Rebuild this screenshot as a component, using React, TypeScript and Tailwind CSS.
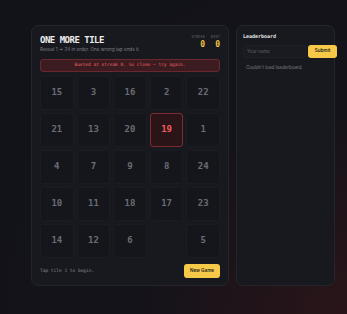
const tiles: (number | null)[] = [
  15, 3, 16, 2, 22,
  21, 13, 20, 19, 1,
  4, 7, 9, 8, 24,
  10, 11, 18, 17, 23,
  14, 12, 6, null, 5,
];

const mono = "font-['DejaVu_Sans_Mono','Liberation_Mono',monospace]";
const sans = "font-['Inter','Noto_Sans',sans-serif]";

function Tile({ n }: { n: number | null }) {
  if (n === null) return <div className="h-[34px]" />;
  const bust = n === 19;
  return (
    <div
      className={
        bust
          ? `flex h-[34px] items-center justify-center rounded-[3px] border border-[#7a2a30] bg-[#2a1418] text-[9px] font-bold text-[#f25c5c] ${mono}`
          : `flex h-[34px] items-center justify-center rounded-[3px] border border-[#1b1c22] bg-[#15161b] text-[9px] font-bold text-[#6a6c74] ${mono}`
      }
    >
      {n}
    </div>
  );
}

export default function App() {
  return (
    <div className="relative h-[314px] w-[347px] overflow-hidden bg-[radial-gradient(circle_at_100%_100%,#2a1519_0%,#14131a_45%,#111318_100%)]">
      <div className="flex gap-[7px] pl-[31px] pt-[25px]">
        {/* game card */}
        <div className="flex w-[198px] flex-col rounded-[7px] border border-[#24252c] bg-[#18191f] px-[8px] pb-[7px] pt-[8px]">
          <div className="flex items-start justify-between">
            <div>
              <h1 className={`text-[9px] font-bold leading-[12px] tracking-[-0.5px] text-[#ececec] ${mono}`}>
                ONE MORE TILE
              </h1>
              <p className={`mt-[1px] text-[4.6px] leading-[6px] text-[#7d7f87] ${sans}`}>
                Reveal 1 → 24 in order. One wrong tap ends it.
              </p>
            </div>
            <div className="flex gap-[6px] pt-[1px]">
              <div className="flex flex-col items-end">
                <span className={`text-[3.2px] uppercase leading-[5px] tracking-[0.2px] text-[#6b6d75] ${sans}`}>Streak</span>
                <span className={`text-[8px] font-bold leading-[9px] text-[#f5c542] ${mono}`}>0</span>
              </div>
              <div className="flex flex-col items-end">
                <span className={`text-[3.2px] uppercase leading-[5px] tracking-[0.2px] text-[#6b6d75] ${sans}`}>Best</span>
                <span className={`text-[8px] font-bold leading-[9px] text-[#f5c542] ${mono}`}>0</span>
              </div>
            </div>
          </div>

          <div className={`mt-[6px] flex h-[13px] items-center justify-center rounded-[3px] border border-[#6a272d] bg-[#3c1c21] text-[4.5px] text-[#e86262] ${mono}`}>
            Busted at streak 0. So close — try again.
          </div>

          <div className="mt-[4px] grid grid-cols-5 gap-[3px]">
            {tiles.map((n, i) => (
              <Tile key={i} n={n} />
            ))}
          </div>

          <div className="mt-[6px] flex items-center justify-between">
            <span className={`text-[4.5px] text-[#8a8c94] ${mono}`}>Tap tile 1 to begin.</span>
            <button className={`h-[14px] w-[36px] rounded-[3px] bg-[#f7c948] text-[4.6px] font-semibold text-[#1b1b1b] ${sans}`}>
              New Game
            </button>
          </div>
        </div>

        {/* leaderboard card */}
        <div className="w-[99px] rounded-[7px] border border-[#24252c] bg-[#18191f] px-[6px] pt-[7px]">
          <h2 className={`text-[5px] font-bold leading-[7px] text-[#e6e6e6] ${mono}`}>Leaderboard</h2>
          <div className="mt-[5px] flex gap-[2px]">
            <input
              placeholder="Your name"
              className={`h-[13px] w-[63px] rounded-[3px] border border-[#1f2027] bg-[#1a1b21] px-[3px] text-[4.5px] text-[#ddd] placeholder:text-[#5d5f67] outline-none ${sans}`}
            />
            <button className={`h-[13px] w-[29px] shrink-0 rounded-[3px] bg-[#f7c948] text-[4.6px] font-semibold text-[#1b1b1b] ${sans}`}>
              Submit
            </button>
          </div>
          <p className={`mt-[7px] pl-[3px] text-[4.5px] text-[#7d7f87] ${sans}`}>Couldn't load leaderboard.</p>
        </div>
      </div>
    </div>
  );
}
